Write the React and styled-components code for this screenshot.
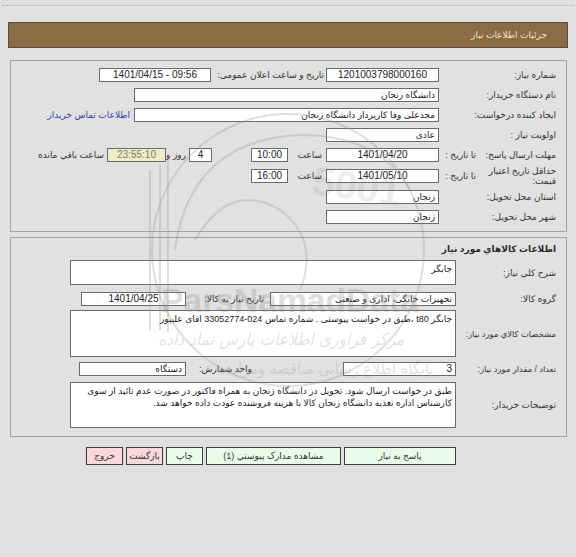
import React from "react";
import styled, { createGlobalStyle } from "styled-components";

const Global = createGlobalStyle`
  html, body { margin: 0; padding: 0; background: #e1e1e1; }
  body {
    font-family: "Liberation Sans", "DejaVu Sans", sans-serif;
    font-size: 9px;
    color: #333;
  }
`;

const Page = styled.div`
  position: relative;
  width: 576px;
  height: 557px;
  overflow: hidden;
  direction: rtl;
  padding-top: 5px;
  box-sizing: border-box;
  background: #e1e1e1;
`;

const TopRule = styled.div`
  margin: 0 2px;
  border-top: 1px dotted #a8a8a8;
`;

const Header = styled.div`
  margin: 16px 8px 0 8px;
  height: 26px;
  box-sizing: border-box;
  background: #8b6c44;
  border: 1px solid #5a4a38;
  display: flex;
  align-items: center;
  padding-right: 20px;
`;

const HeaderTitle = styled.span`
  color: #f2e8cc;
  font-size: 9px;
`;

const Panel = styled.div`
  margin: ${(p) => p.$top}px 9px 0 10px;
  border: 1px solid #a2a2a2;
  padding: ${(p) => p.$pad};
`;

const Row = styled.div`
  display: flex;
  align-items: center;
  height: ${(p) => p.$h || 20}px;
  margin-top: ${(p) => p.$mt || 0}px;
`;

const LabelCell = styled.div`
  flex: none;
  width: ${(p) => p.$w}px;
  display: flex;
  align-items: center;
  white-space: nowrap;
  font-size: ${(p) => (p.$tight ? 8.4 : 9)}px;
`;

const MainLabel = styled.div`
  width: ${(p) => p.$w}px;
  flex: none;
  white-space: normal;
  line-height: 10px;
`;

const SubLabel = styled.span`
  white-space: nowrap;
`;

const InlineLabel = styled.div`
  flex: none;
  width: ${(p) => p.$w}px;
  box-sizing: border-box;
  padding: 0 ${(p) => p.$pr || 0}px 0 ${(p) => p.$pl || 0}px;
  text-align: ${(p) => p.$align || "right"};
  white-space: nowrap;
`;

const Spacer = styled.div`
  flex: none;
  width: ${(p) => p.$w}px;
`;

const Field = styled.div`
  flex: none;
  width: ${(p) => p.$w}px;
  height: ${(p) => p.$h || 14}px;
  box-sizing: border-box;
  border: 1px solid #6a6a6a;
  background: ${(p) => (p.$warn ? "#eeeec4" : "#fff")};
  color: ${(p) => (p.$warn ? "#7a7a6a" : "#222")};
  padding: ${(p) => (p.$multi ? "2px 3px" : "0 3px")};
  line-height: 12px;
  text-align: ${(p) => p.$align || "right"};
  direction: ${(p) => (p.$ltr ? "ltr" : "rtl")};
  white-space: ${(p) => (p.$multi ? "normal" : "nowrap")};
  overflow: hidden;
  font-size: ${(p) => (p.$num ? 10 : 9)}px;
`;

const Link = styled.a`
  margin-right: 4px;
  color: #3a3aad;
  text-decoration: none;
  white-space: nowrap;
`;

const Title = styled.div`
  height: 16px;
  line-height: 16px;
  font-weight: bold;
  color: #2a2a2a;
`;

const Buttons = styled.div`
  display: flex;
  gap: 3px;
  margin-top: 10px;
  padding-right: 120px;
`;

const Button = styled.button`
  width: ${(p) => p.$w}px;
  height: 18px;
  box-sizing: border-box;
  padding: 0;
  border: 1px solid #3c3c3c;
  background: ${(p) => (p.$danger ? "#fbd8da" : "#e9fce9")};
  color: #333;
  font-family: inherit;
  font-size: 9px;
  white-space: nowrap;
  overflow: hidden;
  direction: rtl;
`;

const Watermark = styled.svg`
  position: absolute;
  left: 0;
  top: 0;
  pointer-events: none;
`;

export default function App() {
  return (
    <>
      <Global />
      <Page>
        <TopRule />
        <Header>
          <HeaderTitle>جزئیات اطلاعات نیاز</HeaderTitle>
        </Header>

        <Panel $top={12} $pad="4px 10px 4px 0">
          <Row>
            <LabelCell $w={117}>شماره نیاز:</LabelCell>
            <Field $w={113} $align="center" $num $ltr>1201003798000160</Field>
            <InlineLabel $w={115} $pr={2}>تاریخ و ساعت اعلان عمومی:</InlineLabel>
            <Field $w={112} $align="center" $num $ltr>1401/04/15 - 09:56</Field>
          </Row>
          <Row>
            <LabelCell $w={117}>نام دستگاه خریدار:</LabelCell>
            <Field $w={305}>دانشگاه زنجان</Field>
          </Row>
          <Row>
            <LabelCell $w={117}>ایجاد کننده درخواست:</LabelCell>
            <Field $w={305}>مجدعلی وفا کارپرداز دانشگاه زنجان</Field>
            <Link href="#">اطلاعات تماس خریدار</Link>
          </Row>
          <Row>
            <LabelCell $w={117}>اولویت نیاز :</LabelCell>
            <Field $w={113}>عادی</Field>
          </Row>
          <Row>
            <LabelCell $w={117}>
              <MainLabel $w={80}>مهلت ارسال پاسخ:</MainLabel>
              <SubLabel>تا تاریخ :</SubLabel>
            </LabelCell>
            <Field $w={113} $align="center" $num $ltr>1401/04/20</Field>
            <InlineLabel $w={38} $pr={4}>ساعت</InlineLabel>
            <Field $w={37} $align="center" $num $ltr>10:00</Field>
            <Spacer $w={39} />
            <Field $w={23} $align="center" $num>4</Field>
            <InlineLabel $w={23} $pr={3}>روز و</InlineLabel>
            <Field $w={59} $align="center" $warn $num $ltr>23:55:10</Field>
            <InlineLabel $w={80} $pr={3}>ساعت باقي مانده</InlineLabel>
          </Row>
          <Row $h={22}>
            <LabelCell $w={117}>
              <MainLabel $w={80}>حداقل تاریخ اعتبار قیمت:</MainLabel>
              <SubLabel>تا تاریخ :</SubLabel>
            </LabelCell>
            <Field $w={113} $align="center" $num $ltr>1401/05/10</Field>
            <InlineLabel $w={38} $pr={4}>ساعت</InlineLabel>
            <Field $w={37} $align="center" $num $ltr>16:00</Field>
          </Row>
          <Row>
            <LabelCell $w={117}>استان محل تحویل:</LabelCell>
            <Field $w={113}>زنجان</Field>
          </Row>
          <Row>
            <LabelCell $w={117}>شهر محل تحویل:</LabelCell>
            <Field $w={113}>زنجان</Field>
          </Row>
        </Panel>

        <Panel $top={5} $pad="3px 10px 8px 0">
          <Title>اطلاعات کالاهاي مورد نیاز</Title>
          <Row $h={25} $mt={3}>
            <LabelCell $w={100}>شرح کلي نیاز:</LabelCell>
            <Field $w={386} $h={25} $multi>جابگر</Field>
          </Row>
          <Row $h={22} $mt={3}>
            <LabelCell $w={100}>گروه کالا:</LabelCell>
            <Field $w={186}>تجهیزات خانگی، اداری و صنعتی</Field>
            <InlineLabel $w={84} $pr={6}>تاریخ نیاز به کالا:</InlineLabel>
            <Field $w={105} $align="center" $num $ltr>1401/04/25</Field>
          </Row>
          <Row $h={47}>
            <LabelCell $w={100} $tight>مشخصات کالاي مورد نیاز:</LabelCell>
            <Field $w={386} $h={47} $multi>
              جابگر t80 ،طبق در خواست پیوستی . شماره تماس 024-33052774 اقای علیپور
            </Field>
          </Row>
          <Row $h={22} $mt={1}>
            <LabelCell $w={100} $tight>تعداد / مقدار مورد نیاز:</LabelCell>
            <Field $w={113} $num>3</Field>
            <InlineLabel $w={157} $pl={13} $align="left">واحد شمارش:</InlineLabel>
            <Field $w={107}>دستگاه</Field>
          </Row>
          <Row $h={46} $mt={2}>
            <LabelCell $w={100}>توضیحات خریدار:</LabelCell>
            <Field $w={386} $h={46} $multi>
              طبق در خواست ارسال شود. تحویل در دانشگاه زنجان به همراه فاکتور در صورت عدم تائید از سوی
              کارشناس اداره تغذیه دانشگاه زنجان کالا با هزینه فروشنده عودت داده خواهد شد.
            </Field>
          </Row>
        </Panel>

        <Buttons>
          <Button $w={112}>پاسخ به نیاز</Button>
          <Button $w={135}>مشاهده مدارک پیوستي (1)</Button>
          <Button $w={37}>چاپ</Button>
          <Button $w={37} $danger>بازگشت</Button>
          <Button $w={37} $danger>خروج</Button>
        </Buttons>

        <Watermark width="576" height="557" viewBox="0 0 576 557">
          <g fill="none" stroke="rgba(150,150,150,0.3)" strokeWidth="2">
            <circle cx="288" cy="250" r="136" />
            <path d="M150 170 L150 330 M160 165 L160 330 M168 160 L168 332" />
            <path d="M175 250 Q190 140 300 135 Q380 135 410 190" />
            <path d="M195 240 Q230 180 280 210 Q320 240 300 290" />
          </g>
          <text
            x="355"
            y="200"
            textAnchor="middle"
            fontFamily="Liberation Sans, sans-serif"
            fontWeight="bold"
            fontSize="40"
            fill="rgba(140,140,140,0.18)"
            transform="rotate(8 355 200)"
          >
            5001
          </text>
          <text
            x="290"
            y="312"
            textAnchor="middle"
            textLength="258"
            lengthAdjust="spacingAndGlyphs"
            fontFamily="Liberation Sans, sans-serif"
            fontWeight="bold"
            fontSize="34"
            fill="rgba(140,140,140,0.3)"
          >
            ParsNamadData
          </text>
          <text
            x="281"
            y="345"
            textAnchor="middle"
            textLength="246"
            lengthAdjust="spacingAndGlyphs"
            fontFamily="DejaVu Sans, sans-serif"
            fontStyle="italic"
            fontSize="17"
            fill="rgba(140,140,140,0.25)"
            direction="rtl"
          >
            مرکز فراوری اطلاعات پارس نماد داده
          </text>
          <text
            x="326"
            y="374"
            textAnchor="middle"
            textLength="215"
            lengthAdjust="spacingAndGlyphs"
            fontFamily="DejaVu Sans, sans-serif"
            fontSize="16"
            fill="rgba(140,140,140,0.25)"
            direction="rtl"
          >
            پایگاه اطلاع رسانی مناقصه ومزایده
          </text>
        </Watermark>
      </Page>
    </>
  );
}
